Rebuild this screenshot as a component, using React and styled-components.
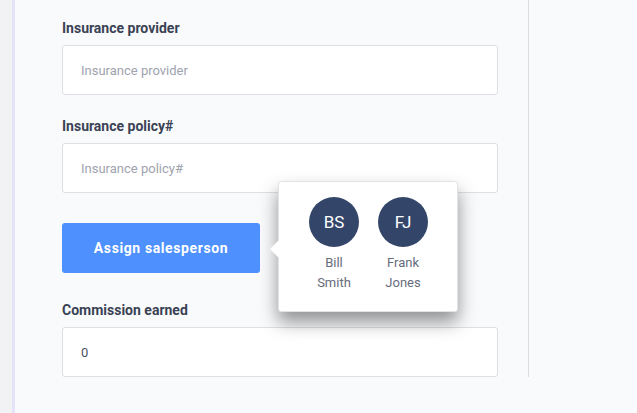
import React from 'react';
import styled, { createGlobalStyle } from 'styled-components';

const GlobalStyle = createGlobalStyle`
  html, body {
    margin: 0;
    padding: 0;
    background: #f9fafc;
    font-family: Roboto, "Liberation Sans", sans-serif;
  }
  * { box-sizing: border-box; }
`;

const Page = styled.div`
  display: flex;
  width: 637px;
  height: 413px;
  overflow: hidden;
  background: #f9fafc;
`;

const Gutter = styled.div`
  width: 15px;
  flex-shrink: 0;
  background: #f2f2f4;
  border-right: 3px solid #e5e3fa;
`;

const Column = styled.div`
  width: 514px;
  align-self: flex-start;
  padding: 20px 30px 0 47px;
  border-right: 1px solid #dcdde3;
`;

const Field = styled.div`
  display: flex;
  flex-direction: column;
  margin-bottom: ${p => p.$gap || 0}px;
`;

const Label = styled.label`
  font-size: 14px;
  line-height: 17px;
  font-weight: 700;
  color: #3a4254;
  margin-bottom: 8px;
`;

const Input = styled.input`
  height: 50px;
  width: 436px;
  border: 1px solid #dfe0e5;
  border-radius: 3px;
  background: #fff;
  padding: 0 18px;
  font-family: inherit;
  font-size: 13px;
  color: #4a5060;
  outline: none;
  &::placeholder { color: #a0a3ae; }
`;

const ButtonRow = styled.div`
  position: relative;
  margin-bottom: 29px;
`;

const Button = styled.button`
  width: 198px;
  height: 50px;
  border: none;
  border-radius: 3px;
  background: #4d90fe;
  color: #fff;
  font-family: inherit;
  font-size: 14px;
  font-weight: 700;
  letter-spacing: 0.6px;
  cursor: pointer;
`;

const Popover = styled.div`
  position: absolute;
  left: 216px;
  top: -42px;
  width: 180px;
  height: 131px;
  background: #fff;
  border: 1px solid #e2e3e7;
  border-radius: 3px;
  box-shadow: 0 10px 18px rgba(0, 0, 0, 0.42);
  display: flex;
  gap: 19px;
  padding: 15px 0 0 30px;

  &::before {
    content: '';
    position: absolute;
    left: -9px;
    top: 58px;
    width: 0;
    height: 0;
    border-top: 9px solid transparent;
    border-bottom: 9px solid transparent;
    border-right: 9px solid #fff;
  }
`;

const Person = styled.div`
  display: flex;
  flex-direction: column;
  align-items: center;
  width: 50px;
`;

const Avatar = styled.div`
  width: 50px;
  height: 50px;
  border-radius: 50%;
  background: #34456a;
  color: #fff;
  font-size: 17px;
  display: flex;
  align-items: center;
  justify-content: center;
  margin-bottom: 6px;
`;

const Name = styled.div`
  font-size: 13px;
  line-height: 20px;
  color: #666c7c;
  text-align: center;
`;

const people = [
  { initials: 'BS', first: 'Bill', last: 'Smith' },
  { initials: 'FJ', first: 'Frank', last: 'Jones' },
];

export default function App() {
  return (
    <>
      <GlobalStyle />
      <Page>
        <Gutter />
        <Column>
          <Field $gap={23}>
            <Label>Insurance provider</Label>
            <Input placeholder="Insurance provider" />
          </Field>
          <Field $gap={30}>
            <Label>Insurance policy#</Label>
            <Input placeholder="Insurance policy#" />
          </Field>
          <ButtonRow>
            <Button>Assign salesperson</Button>
            <Popover>
              {people.map(p => (
                <Person key={p.initials}>
                  <Avatar>{p.initials}</Avatar>
                  <Name>{p.first}<br />{p.last}</Name>
                </Person>
              ))}
            </Popover>
          </ButtonRow>
          <Field>
            <Label>Commission earned</Label>
            <Input defaultValue="0" />
          </Field>
        </Column>
      </Page>
    </>
  );
}
